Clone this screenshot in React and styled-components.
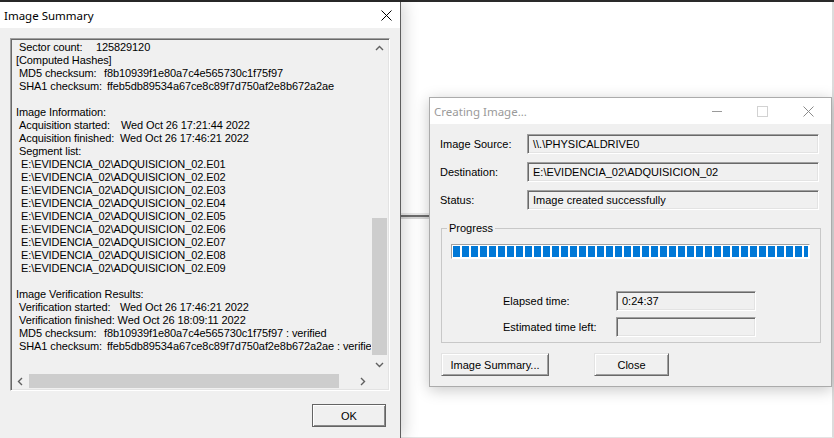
import React from 'react';
import styled, { createGlobalStyle } from 'styled-components';

const GlobalStyle = createGlobalStyle`
  html, body {
    margin: 0;
    padding: 0;
    background: #ffffff;
    overflow: hidden;
  }
  * {
    box-sizing: border-box;
  }
`;

const UI_FONT = '"Liberation Sans", Arial, sans-serif';
const TITLE_FONT = '"Noto Sans", "Open Sans", sans-serif';

const Screen = styled.div`
  width: 834px;
  height: 438px;
  display: flex;
  flex-direction: column;
  font-family: ${UI_FONT};
  font-size: 11px;
  color: #000;
`;

const TopEdge = styled.div`
  height: 2px;
  background: #2a2a2a;
`;

const Stage = styled.div`
  flex: 1;
  display: flex;
  min-height: 0;
`;

/* ---------- left window : Image Summary ---------- */

const SummaryWindow = styled.section`
  position: relative;
  z-index: 1;
  width: 401px;
  display: flex;
  flex-direction: column;
  background: #f0f0f0;
  border-right: 1px solid #5e5e5e;
  box-shadow: 4px 0 14px rgba(0, 0, 0, 0.16);
`;

const TitleBar = styled.header`
  height: 26px;
  flex: none;
  display: flex;
  align-items: center;
  justify-content: space-between;
  background: #ffffff;
  padding: 0 ${(p) => p.$padRight || 8}px 0 4px;
`;

const TitleText = styled.span`
  font-family: ${TITLE_FONT};
  font-size: 11.5px;
  color: ${(p) => (p.$inactive ? '#9a9a9a' : '#000')};
`;

const TitleControls = styled.div`
  display: flex;
  align-items: center;
  gap: ${(p) => p.$gap || 0}px;
`;

const SummaryBody = styled.div`
  flex: 1;
  display: flex;
  flex-direction: column;
  padding: 10px 12px 0 10px;
`;

const TextBox = styled.div`
  width: 380px;
  height: 353px;
  padding: 1px;
  display: grid;
  grid-template-columns: 1fr 17px;
  grid-template-rows: 1fr 16px;
  border: 1px solid;
  border-color: #a0a0a0 #ffffff #ffffff #a0a0a0;
  box-shadow: inset 1px 1px 0 #696969, inset -1px -1px 0 #e3e3e3;
`;

const LogContent = styled.div`
  overflow: hidden;
  padding: 1px 0 0 4px;
  line-height: 13px;
  letter-spacing: -0.1px;
  white-space: pre;
`;

const LogLine = styled.div`
  display: flex;
  height: 13px;
  padding-left: ${(p) => [0, 3, 5][p.$indent || 0]}px;
`;

const LogLabel = styled.span`
  flex: none;
  min-width: ${(p) => p.$w}px;
`;

const VScroll = styled.div`
  display: flex;
  flex-direction: column;
  background: #f0f0f0;
`;

const HScroll = styled.div`
  display: flex;
  background: #f0f0f0;
`;

const ArrowCell = styled.div`
  flex: none;
  width: 17px;
  height: ${(p) => (p.$h ? 16 : 17)}px;
  display: flex;
  align-items: center;
  justify-content: center;
`;

const VTrack = styled.div`
  flex: 1;
  padding: 0 1px;
`;

const VThumb = styled.div`
  margin-top: 161px;
  height: 137px;
  background: #cdcdcd;
`;

const HTrack = styled.div`
  flex: 1;
  padding: 1px 0;
`;

const HThumb = styled.div`
  width: 310px;
  height: 100%;
  background: #cdcdcd;
`;

const Corner = styled.div`
  background: #f0f0f0;
`;

const SummaryFooter = styled.div`
  display: flex;
  justify-content: flex-end;
  padding: 13px 2px 0 0;
`;

const Button = styled.button`
  width: ${(p) => p.$w}px;
  height: 23px;
  padding: 0;
  font-family: ${UI_FONT};
  font-size: 11px;
  color: #000;
  background: #f0f0f0;
  border: 1px solid;
  border-color: ${(p) => (p.$default ? '#646464' : '#e3e3e3 #696969 #696969 #e3e3e3')};
  box-shadow: ${(p) =>
    p.$default
      ? 'inset 1px 1px 0 #ffffff, inset -1px -1px 0 #8a8a8a'
      : 'inset 1px 1px 0 #ffffff, inset -1px -1px 0 #a0a0a0'};
`;

/* ---------- right side : desktop + Creating Image dialog ---------- */

const Desktop = styled.div`
  flex: 1;
  padding: 95px 0 0 28px;
  background-color: #ffffff;
  background-image: linear-gradient(
    to bottom,
    transparent 211px,
    #e8e8e8 211px,
    #e8e8e8 213px,
    #6c6c6c 213px,
    #6c6c6c 215px,
    #d6d6d6 215px,
    #d6d6d6 217px,
    transparent 217px
  );
  border-right: 2px solid #dcdcdc;
  border-bottom: 1px solid #e4e4e4;
`;

const Dialog = styled.section`
  width: 403px;
  background: #f0f0f0;
  border: 1px solid #ababab;
  box-shadow: 0 3px 14px rgba(0, 0, 0, 0.22);
`;

const DialogBody = styled.div`
  padding: 10px 12px 10px 10px;
  display: flex;
  flex-direction: column;
`;

const FieldGrid = styled.div`
  display: grid;
  grid-template-columns: 87px 1fr;
  row-gap: 8px;
  align-items: center;
`;

const Field = styled.div`
  width: ${(p) => (p.$w ? `${p.$w}px` : 'auto')};
  height: ${(p) => p.$h || 20}px;
  display: flex;
  align-items: center;
  padding-left: 5px;
  background: #f0f0f0;
  border: 1px solid;
  border-color: #a0a0a0 #ffffff #ffffff #a0a0a0;
  box-shadow: inset 1px 1px 0 #696969, inset -1px -1px 0 #e3e3e3;
  white-space: nowrap;
`;

const GroupBox = styled.fieldset`
  margin: 12px -2px 0 1px;
  padding: 7px 10px 5px 9px;
  border: 1px solid #c8c8c8;
  border-radius: 0;
  min-width: 0;
`;

const GroupLegend = styled.legend`
  margin-left: -4px;
  padding: 0 2px;
  font-size: 11px;
  line-height: 13px;
`;

const ProgressBar = styled.div`
  height: 15px;
  margin-top: 2px;
  padding: 1px;
  background: #ffffff;
  border: 1px solid;
  border-color: #a0a0a0 #ffffff #ffffff #a0a0a0;
`;

const ProgressFill = styled.div`
  height: 100%;
  background: repeating-linear-gradient(
    to right,
    #0078d7 0,
    #0078d7 7px,
    #ffffff 7px,
    #ffffff 9px
  );
`;

const TimeGrid = styled.div`
  display: grid;
  grid-template-columns: 113px 140px;
  row-gap: 6px;
  align-items: center;
  padding-left: 52px;
  margin-top: 32px;
`;

const ButtonRow = styled.div`
  display: flex;
  gap: 45px;
  margin: 10px 0 0 1px;
`;

/* ---------- small drawings ---------- */

const CloseGlyph = ({ color = '#000', size = 11 }) => (
  <svg width={size} height={size} viewBox="0 0 11 11">
    <path d="M0.5 0.5 L10.5 10.5 M10.5 0.5 L0.5 10.5" stroke={color} strokeWidth="1" fill="none" />
  </svg>
);

const MinGlyph = () => (
  <svg width="10" height="11" viewBox="0 0 10 11">
    <path d="M0 5.5 H10" stroke="#9a9a9a" strokeWidth="1" />
  </svg>
);

const MaxGlyph = () => (
  <svg width="11" height="11" viewBox="0 0 11 11">
    <rect x="0.5" y="0.5" width="10" height="10" stroke="#d2d2d2" fill="none" />
  </svg>
);

const Chevron = ({ dir }) => {
  const d = {
    up: 'M1 5 L4.5 1.5 L8 5',
    down: 'M1 2 L4.5 5.5 L8 2',
    left: 'M5 1 L1.5 4.5 L5 8',
    right: 'M2 1 L5.5 4.5 L2 8',
  }[dir];
  const horiz = dir === 'left' || dir === 'right';
  return (
    <svg width={horiz ? 7 : 9} height={horiz ? 9 : 7} viewBox={horiz ? '0 0 7 9' : '0 0 9 7'}>
      <path d={d} stroke="#606060" strokeWidth="1.4" fill="none" />
    </svg>
  );
};

/* ---------- data ---------- */

const segments = Array.from({ length: 9 }, (_, i) => `E:\\EVIDENCIA_02\\ADQUISICION_02.E0${i + 1}`);

const logLines = [
  { indent: 1, label: 'Sector count:', w: 77, value: '125829120' },
  { indent: 0, text: '[Computed Hashes]' },
  { indent: 1, label: 'MD5 checksum:', w: 85, value: 'f8b10939f1e80a7c4e565730c1f75f97' },
  { indent: 1, label: 'SHA1 checksum:', w: 88, value: 'ffeb5db89534a67ce8c89f7d750af2e8b672a2ae' },
  { text: '' },
  { indent: 0, text: 'Image Information:' },
  { indent: 1, label: 'Acquisition started:', w: 102, value: 'Wed Oct 26 17:21:44 2022' },
  { indent: 1, label: 'Acquisition finished:', w: 101, value: 'Wed Oct 26 17:46:21 2022' },
  { indent: 1, text: 'Segment list:' },
  ...segments.map((s) => ({ indent: 2, text: s })),
  { text: '' },
  { indent: 0, text: 'Image Verification Results:' },
  { indent: 1, label: 'Verification started:', w: 101, value: 'Wed Oct 26 17:46:21 2022' },
  { indent: 1, label: 'Verification finished:', w: 98, value: 'Wed Oct 26 18:09:11 2022' },
  { indent: 1, label: 'MD5 checksum:', w: 85, value: 'f8b10939f1e80a7c4e565730c1f75f97 : verified' },
  { indent: 1, label: 'SHA1 checksum:', w: 88, value: 'ffeb5db89534a67ce8c89f7d750af2e8b672a2ae : verified' },
];

const fields = [
  ['Image Source:', '\\\\.\\PHYSICALDRIVE0'],
  ['Destination:', 'E:\\EVIDENCIA_02\\ADQUISICION_02'],
  ['Status:', 'Image created successfully'],
];

const App = () => {
  return (
    <Screen>
      <GlobalStyle />
      <TopEdge />
      <Stage>
        <SummaryWindow>
          <TitleBar>
            <TitleText>Image Summary</TitleText>
            <CloseGlyph />
          </TitleBar>
          <SummaryBody>
            <TextBox>
              <LogContent>
                {logLines.map((l, i) => (
                  <LogLine key={i} $indent={l.indent}>
                    {l.label ? (
                      <>
                        <LogLabel $w={l.w}>{l.label + ' '}</LogLabel>
                        <span>{l.value}</span>
                      </>
                    ) : (
                      l.text
                    )}
                  </LogLine>
                ))}
              </LogContent>
              <VScroll>
                <ArrowCell>
                  <Chevron dir="up" />
                </ArrowCell>
                <VTrack>
                  <VThumb />
                </VTrack>
                <ArrowCell>
                  <Chevron dir="down" />
                </ArrowCell>
              </VScroll>
              <HScroll>
                <ArrowCell $h>
                  <Chevron dir="left" />
                </ArrowCell>
                <HTrack>
                  <HThumb />
                </HTrack>
                <ArrowCell $h>
                  <Chevron dir="right" />
                </ArrowCell>
              </HScroll>
              <Corner />
            </TextBox>
            <SummaryFooter>
              <Button $w={74} $default>
                OK
              </Button>
            </SummaryFooter>
          </SummaryBody>
        </SummaryWindow>

        <Desktop>
          <Dialog>
            <TitleBar $padRight={17}>
              <TitleText $inactive>Creating Image...</TitleText>
              <TitleControls $gap={35}>
                <MinGlyph />
                <MaxGlyph />
                <CloseGlyph color="#8a8a8a" />
              </TitleControls>
            </TitleBar>
            <DialogBody>
              <FieldGrid>
                {fields.map(([label, value]) => (
                  <React.Fragment key={label}>
                    <span>{label}</span>
                    <Field>{value}</Field>
                  </React.Fragment>
                ))}
              </FieldGrid>
              <GroupBox>
                <GroupLegend>Progress</GroupLegend>
                <ProgressBar>
                  <ProgressFill />
                </ProgressBar>
                <TimeGrid>
                  <span>Elapsed time:</span>
                  <Field $w={140}>0:24:37</Field>
                  <span>Estimated time left:</span>
                  <Field $w={140} />
                </TimeGrid>
              </GroupBox>
              <ButtonRow>
                <Button $w={108}>Image Summary...</Button>
                <Button $w={75}>Close</Button>
              </ButtonRow>
            </DialogBody>
          </Dialog>
        </Desktop>
      </Stage>
    </Screen>
  );
};

export default App;
